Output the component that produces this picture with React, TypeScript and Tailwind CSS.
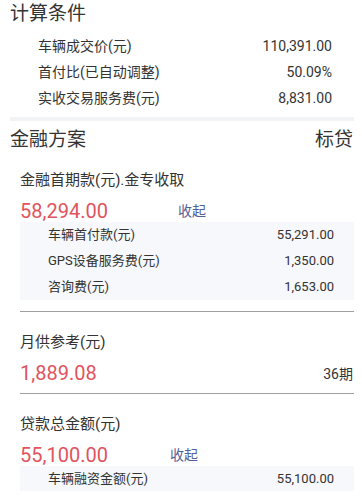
import React from 'react';

const font = { fontFamily: 'Roboto, "Noto Sans CJK SC", sans-serif' };

interface Item {
    label: string;
    value: string;
}

const conditions: Item[] = [
    { label: '车辆成交价(元)', value: '110,391.00' },
    { label: '首付比(已自动调整)', value: '50.09%' },
    { label: '实收交易服务费(元)', value: '8,831.00' },
];

const downPayment: Item[] = [
    { label: '车辆首付款(元)', value: '55,291.00' },
    { label: 'GPS设备服务费(元)', value: '1,350.00' },
    { label: '咨询费(元)', value: '1,653.00' },
];

const loan: Item[] = [{ label: '车辆融资金额(元)', value: '55,100.00' }];

const DetailBox: React.FC<{ items: Item[]; rowClass: string }> = ({ items, rowClass }) => (
    <div className="bg-[#f6f8fb]">
        {items.map((item) => (
            <div key={item.label} className={`${rowClass} flex items-center justify-between pl-[28px] pr-[20px] text-[13px] text-[#333]`}>
                <span>{item.label}</span>
                <span>{item.value}</span>
            </div>
        ))}
    </div>
);

const Amount: React.FC<{ value: string; width: string; right?: React.ReactNode; link?: boolean }> = ({ value, width, right, link }) => (
    <div className="h-[26px] flex items-end justify-between">
        <div className="flex items-end">
            <span className={`${width} text-[20px] leading-[22px] text-[#e0545e]`}>{value}</span>
            {link && <span className="text-[14px] leading-[22px] text-[#52609a]">收起</span>}
        </div>
        {right}
    </div>
);

export default function App() {
    return (
        <div className="w-[362px] h-[496px] bg-white overflow-hidden text-[#333]" style={font}>
            <div className="px-[10px]">
                <div className="h-[28px] leading-[28px] text-[19px]">计算条件</div>
                <div className="pl-[28px] pr-[20px] pt-[5px]">
                    {conditions.map((item) => (
                        <div key={item.label} className="h-[26px] flex items-center justify-between text-[14px]">
                            <span>{item.label}</span>
                            <span>{item.value}</span>
                        </div>
                    ))}
                </div>
                <div className="mt-[6px] mr-[-2px] h-[4px] bg-[#f2f3f6]" />
            </div>

            <div className="h-[38px] px-[10px] pr-[9px] flex items-center justify-between text-[19px]">
                <span>金融方案</span>
                <span>标贷</span>
            </div>

            <div className="pl-[20px] pr-[8px]">
                <div className="mt-[5px] h-[32px] leading-[32px] text-[15px]">金融首期款(元).金专收取</div>
                <Amount value="58,294.00" width="w-[158px]" link />
                <DetailBox items={downPayment} rowClass="h-[26px]" />
                <div className="mt-[11px] h-px bg-[#a0a0a0]" />

                <div className="mt-[14px] h-[32px] leading-[32px] text-[15px]">月供参考(元)</div>
                <Amount
                    value="1,889.08"
                    width="w-[158px]"
                    right={<span className="text-[14px] leading-[20px] pr-[1px]">36期</span>}
                />
                <div className="mt-[9px] h-px bg-[#a0a0a0]" />

                <div className="mt-[14px] h-[32px] leading-[32px] text-[15px]">贷款总金额(元)</div>
                <Amount value="55,100.00" width="w-[150px]" link />
                <DetailBox items={loan} rowClass="h-[25px]" />
            </div>
        </div>
    );
}
